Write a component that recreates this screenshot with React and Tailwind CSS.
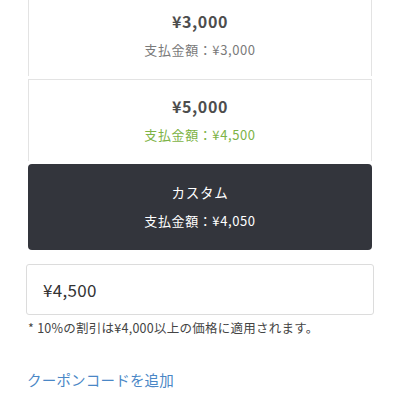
export default function App() {
  const font = { fontFamily: '"Noto Sans CJK JP", "Noto Sans", sans-serif' };
  return (
    <div className="w-[400px] h-[400px] overflow-hidden bg-white" style={font}>
      <div className="flex flex-col px-[28px]">
        <div className="-mt-[6px] h-[82px] border-x border-t border-[#e3e3e3] bg-white flex flex-col items-center pt-[16px]">
          <div className="text-[16px] leading-[20px] font-semibold text-[#4d4d4d] tracking-[0.6px]">¥3,000</div>
          <div className="mt-[10px] text-[13px] leading-[18px] text-[#7a7a7a] tracking-[0.6px]">支払金額：¥3,000</div>
        </div>
        <div className="mt-[3px] h-[82px] border-x border-t border-[#e3e3e3] bg-white flex flex-col items-center pt-[16px]">
          <div className="text-[16px] leading-[20px] font-semibold text-[#4d4d4d] tracking-[0.6px]">¥5,000</div>
          <div className="mt-[10px] text-[13px] leading-[18px] text-[#7db346] tracking-[0.6px]">支払金額：¥4,500</div>
        </div>
        <div className="mt-[3px] h-[86px] rounded-[4px] bg-[#33353c] flex flex-col items-center pt-[18px]">
          <div className="text-[13.5px] leading-[20px] text-white tracking-[0.8px]">カスタム</div>
          <div className="mt-[10px] text-[13px] leading-[18px] text-white tracking-[0.6px]">支払金額：¥4,050</div>
        </div>
        <div className="mt-[14px] -mx-[2px] h-[51px] border border-[#dcdcdc] rounded-[3px] flex items-center pl-[16px]">
          <span className="text-[17px] text-[#333] tracking-[0.3px]">¥4,500</span>
        </div>
        <div className="mt-[5px] text-[12.5px] leading-[16px] text-[#444] whitespace-nowrap tracking-[0.25px]">* 10%の割引は¥4,000以上の価格に適用されます。</div>
        <div className="mt-[34px] -ml-[1px] text-[14.5px] leading-[20px] text-[#4a87c6] whitespace-nowrap tracking-[0.2px]">クーポンコードを追加</div>
      </div>
    </div>
  );
}
